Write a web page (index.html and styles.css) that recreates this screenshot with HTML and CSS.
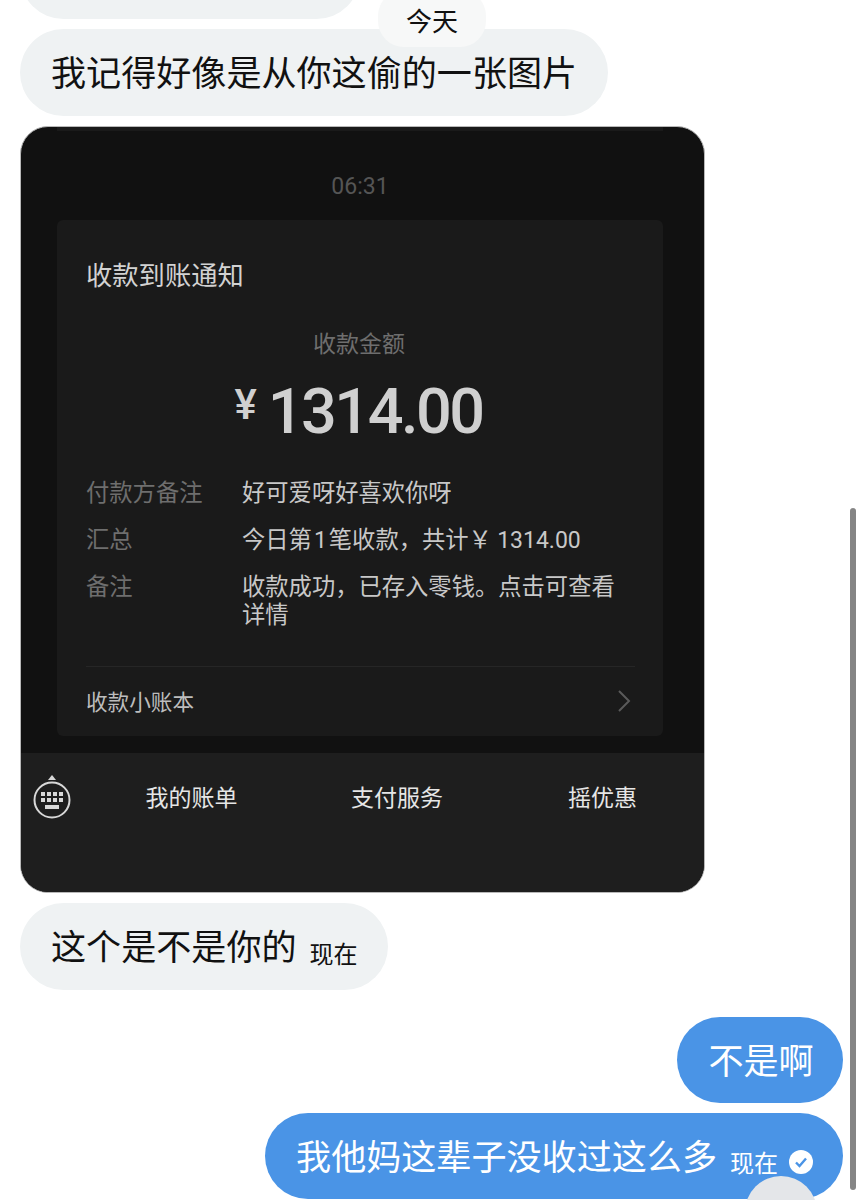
FILE: index.html
```html
<!DOCTYPE html>
<html lang="zh">
<head>
  <meta charset="UTF-8">
  <title>聊天</title>
  <link rel="stylesheet" href="styles.css">
</head>
<body>
  <div class="chat">
    <div class="bubble bubble-clipped"></div>
    <div class="bubble">我记得好像是从你这偷的一张图片</div>

    <div class="shot">
      <div class="shot-main">
        <div class="prev-card"></div>
        <div class="shot-time">06:31</div>
        <div class="notice">
          <div class="notice-title">收款到账通知</div>
          <div class="amount-label">收款金额</div>
          <div class="amount"><span class="yen">¥</span>1314.00</div>
          <div class="notice-row">
            <div class="notice-key">付款方备注</div>
            <div class="notice-val">好可爱呀好喜欢你呀</div>
          </div>
          <div class="notice-row">
            <div class="notice-key">汇总</div>
            <div class="notice-val">今日第<span class="num num-one">1</span>笔收款，共计￥ <span class="num">1314.00</span></div>
          </div>
          <div class="notice-row">
            <div class="notice-key">备注</div>
            <div class="notice-val">收款成功，已存入零钱。点击可查看详情</div>
          </div>
          <div class="notice-foot">
            <span>收款小账本</span>
            <svg class="chevron" width="14" height="22" viewBox="0 0 14 22"><path d="M2 1l10 10L2 21" fill="none" stroke="#5a5a5a" stroke-width="2"/></svg>
          </div>
        </div>
      </div>
      <div class="shot-bar">
        <div class="kb-cell">
          <svg width="40" height="48" viewBox="0 0 40 48">
            <path d="M20 1l4 5h-8z" fill="#d8d8d8"/>
            <circle cx="20" cy="26" r="17.5" fill="none" stroke="#d8d8d8" stroke-width="2"/>
            <g fill="#d8d8d8">
              <rect x="9" y="18" width="4" height="4"/><rect x="15" y="18" width="4" height="4"/><rect x="21" y="18" width="4" height="4"/><rect x="27" y="18" width="4" height="4"/>
              <rect x="9" y="24" width="4" height="4"/><rect x="15" y="24" width="4" height="4"/><rect x="21" y="24" width="4" height="4"/><rect x="27" y="24" width="4" height="4"/>
              <rect x="13" y="31" width="14" height="4"/>
            </g>
          </svg>
        </div>
        <div class="bar-item">我的账单</div>
        <div class="bar-item">支付服务</div>
        <div class="bar-item">摇优惠</div>
      </div>
    </div>

    <div class="bubble bubble-stamped">这个是不是你的<span class="stamp">现在</span></div>

    <div class="bubble bubble-me bubble-first-me">不是啊</div>
    <div class="bubble bubble-me bubble-stamped">我他妈这辈子没收过这么多<span class="stamp">现在</span>
      <svg class="read" width="26" height="26" viewBox="0 0 26 26"><circle cx="13" cy="13" r="12" fill="#fff"/><path d="M8 13.5l3.5 3.5 6.5-7.5" fill="none" stroke="#4a94e6" stroke-width="2.4"/></svg>
    </div>
  </div>

  <div class="date-pill">今天</div>
  <div class="scrollbar"></div>
  <div class="fab"></div>
</body>
</html>
```

FILE: styles.css
```css
html, body { margin: 0; padding: 0; height: 1200px; overflow: hidden; background: #fff; }
body { font-family: "Noto Sans CJK SC", "Liberation Sans", sans-serif; font-weight: 400; color: #111; position: relative; }

.chat { display: flex; flex-direction: column; align-items: flex-start; gap: 10px; padding: 0 20px; margin-top: -68px; }
.bubble { display: flex; align-items: center; height: 87px; box-sizing: border-box; padding: 0 31px 4px 31px; background: #eff2f3; border-radius: 44px; font-size: 35.1px; line-height: 83px; white-space: nowrap; }
.bubble-clipped { width: 340px; }
.bubble-stamped { padding-right: 30px; }
.bubble-me { align-self: flex-end; height: 86px; background: #4a94e6; color: #fff; }
.bubble-me.bubble-stamped { padding-right: 29px; }
.bubble-first-me { margin-top: 17px; padding-right: 29.4px; }
.stamp { font-size: 24px; margin-left: 13px; line-height: 1; position: relative; top: 8px; }
.read { margin-left: 10px; position: relative; top: 8px; }

.shot { width: 685px; height: 767px; box-sizing: border-box; border: 1px solid #b8b8b8; border-radius: 28px; overflow: hidden; background: #111; display: flex; flex-direction: column; }
.shot-main { height: 626px; box-sizing: border-box; display: flex; flex-direction: column; align-items: center; }
.prev-card { width: 606px; height: 4px; background: #1a1a1a; margin-left: -5px; flex: none; }
.shot-time { font-family: "Roboto", sans-serif; font-size: 23px; line-height: 28px; margin-top: 42px; margin-left: -5px; color: #555; }
.notice { width: 606px; height: 516px; box-sizing: border-box; margin-top: 19px; margin-left: -5px; padding: 0 28px 0 29px; background: #1a1a1a; border-radius: 6px; color: #c8c8c8; display: flex; flex-direction: column; }
.notice-title { font-size: 26.3px; line-height: 36px; margin-top: 36px; color: #d2d2d2; }
.amount-label { font-size: 23px; line-height: 32px; margin-top: 34px; text-align: center; color: #6e6e6e; padding-right: 3px; }
.amount { font-family: "Roboto", sans-serif; font-weight: 500; font-size: 63px; line-height: 72px; margin-top: 11px; margin-bottom: 29px; padding-right: 4px; letter-spacing: -2.5px; text-align: center; color: #d0d0d0; }
.yen { font-size: 42px; vertical-align: 14px; margin-right: 11px; letter-spacing: 0; }
.notice-row { display: flex; font-size: 23.3px; line-height: 28px; margin-bottom: 19px; }
.notice-key { width: 156px; flex: none; color: #6e6e6e; }
.notice-val { flex: 1; }
.num { font-family: "Roboto", sans-serif; font-size: 23px; line-height: 1; }
.num-one { margin: 0 2px; }
.notice-foot { margin-top: auto; height: 70px; flex: none; display: flex; align-items: center; justify-content: space-between; border-top: 1px solid #262626; font-size: 21.6px; color: #bdbdbd; padding-bottom: 2px; box-sizing: border-box; }
.chevron { margin-right: 4px; }

.shot-bar { flex: 1; background: #1e1e1e; display: grid; grid-template-columns: 68px 205px 206px 205px; align-items: start; }
.kb-cell { padding: 21px 0 0 11px; }
.bar-item { text-align: center; font-size: 23px; line-height: 32px; margin-top: 27px; color: #e6e6e6; }

.date-pill { position: absolute; left: 378px; top: -10px; width: 108px; height: 57px; box-sizing: border-box; padding-top: 10px; background: #f7f8f8; border-radius: 26px; font-size: 26px; line-height: 40px; text-align: center; }
.scrollbar { position: absolute; left: 850px; top: 508px; width: 6px; height: 682px; background: #858585; border-radius: 3px; }
.fab { position: absolute; left: 745px; top: 1176px; width: 72px; height: 72px; background: #e4e6e9; border-radius: 50%; }
```
